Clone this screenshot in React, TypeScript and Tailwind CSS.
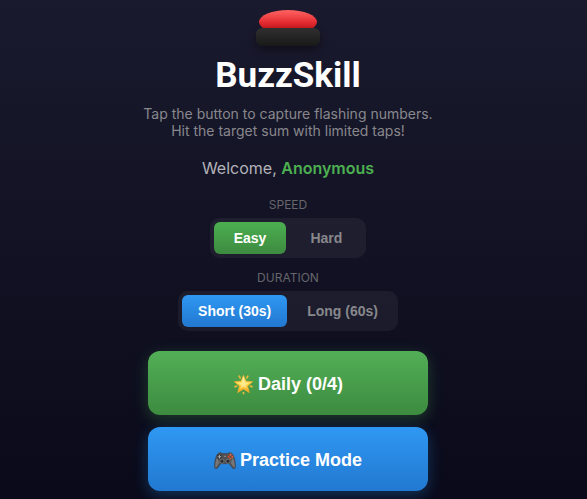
import { useState, type ReactNode } from "react";
import clsx from "clsx";

type OptionGroupProps = {
  id: string;
  label: string;
  options: string[];
  buttonClass: string;
  activeClass: string;
};

function OptionGroup({ id, label, options, buttonClass, activeClass }: OptionGroupProps) {
  const [selected, setSelected] = useState(options[0]);

  return (
    <section className="flex flex-col items-center gap-[5px]">
      <h2 id={id} className="text-[12px] leading-[17px] text-[#66666b] uppercase">
        {label}
      </h2>
      <div
        role="group"
        aria-labelledby={id}
        className="flex gap-1 rounded-[10px] bg-white/5 p-1"
      >
        {options.map((option) => (
          <button
            key={option}
            type="button"
            aria-pressed={selected === option}
            onClick={() => setSelected(option)}
            className={clsx(
              "h-8 rounded-md font-['Liberation_Sans',Arial,sans-serif] text-[14px] font-bold",
              buttonClass,
              selected === option ? activeClass : "text-[#88888c]",
            )}
          >
            {option}
          </button>
        ))}
      </div>
    </section>
  );
}

function MenuButton({ className, children }: { className: string; children: ReactNode }) {
  return (
    <button
      type="button"
      className={clsx(
        "flex h-16 w-full items-center justify-center gap-1 rounded-xl pt-0.5 font-['Liberation_Sans',Arial,sans-serif] text-[18px] font-bold text-white",
        className,
      )}
    >
      {children}
    </button>
  );
}

function Buzzer() {
  return (
    <div className="flex flex-col items-center" aria-hidden="true">
      <div className="-mb-1.5 h-6 w-[58px] rounded-[50%] bg-linear-to-b from-[#ff6262] via-[#e52d33] to-[#b8000a]" />
      <div className="z-10 h-[18px] w-16 rounded-md bg-linear-to-b from-[#303030] to-[#191919] shadow-[0_4px_8px_rgba(0,0,0,0.4)]" />
    </div>
  );
}

function StarIcon() {
  return (
    <svg className="size-[21px]" viewBox="0 0 21 21" aria-hidden="true">
      <defs>
        <linearGradient id="star" x1="0" y1="0" x2="0" y2="1">
          <stop offset="0" stopColor="#fff3a3" />
          <stop offset="0.5" stopColor="#ffd94a" />
          <stop offset="1" stopColor="#f5a51d" />
        </linearGradient>
      </defs>
      <g stroke="#e5b93c" strokeWidth="1.8" strokeLinecap="round">
        <path d="M6.2 2.2l.9 1.7M14.8 2.2l-.9 1.7M2 12.7l1.6-.5M19 12.7l-1.6-.5M10.5 18.6v.8" />
      </g>
      <path
        d="M10.5 1.2l2.5 6 6.7.5-5.1 4.3 1.7 6.6-5.8-3.5-5.8 3.5L6.4 12 1.3 7.7 8 7.2z"
        fill="url(#star)"
        stroke="#f2ac2b"
        strokeWidth="0.7"
        strokeLinejoin="round"
      />
      <path
        d="M10.5 4.4l1.4 4.1 3.7.4-3 2.3.8 3.3-2.9-1.9-2.9 1.9.8-3.3-3-2.3 3.7-.4z"
        fill="#fff6ba"
        opacity="0.6"
      />
    </svg>
  );
}

function GamepadIcon() {
  return (
    <svg className="h-[21px] w-[22px]" viewBox="0 0 22 21" aria-hidden="true">
      <path
        d="M4.4 3.2c1.4-.9 3.3-.7 4.2.3h4.8c.9-1 2.8-1.2 4.2-.3 2.3 1.5 4 8.2 3.9 13.3 0 1.6-.9 2.5-2 2.2-1.8-.4-2.7-3.6-4.2-5H6.7c-1.5 1.4-2.4 4.6-4.2 5-1.1.3-2-.6-2-2.2C.4 11.4 2.1 4.7 4.4 3.2z"
        fill="#505053"
        stroke="#38383a"
        strokeWidth="0.5"
      />
      <path
        d="M1.3 17c-.2-3 .5-6.8 1.9-9.7l2 5.7c-1.3 1.3-2 4-3.2 4.6-.4.1-.7-.2-.7-.6zM20.700 17c.2-3-.5-6.8-1.9-9.7l-2 5.7c1.3 1.3 2 4 3.2 4.6.4.1.7-.2.7-.6z"
        fill="#77777a"
      />
      <circle cx="5.5" cy="6.7" r="2.5" fill="#343437" />
      <path d="M5.5 4.9v3.6M3.7 6.700h3.6" stroke="#a9a9ab" strokeWidth="1.1" />
      <circle cx="8" cy="11.2" r="2.1" fill="#2c2c2f" stroke="#8a8a8d" strokeWidth="0.7" />
      <circle cx="14" cy="11.2" r="2.1" fill="#2c2c2f" stroke="#8a8a8d" strokeWidth="0.7" />
      <circle cx="16.5" cy="4.7" r="1.1" fill="#f0603c" />
      <circle cx="18.4" cy="6.7" r="1.1" fill="#e8552f" />
      <circle cx="14.6" cy="6.7" r="1.1" fill="#d9482b" />
      <circle cx="16.5" cy="8.5" r="1.1" fill="#c9622f" />
      <path d="M10 6.3h2" stroke="#98989b" strokeWidth="0.9" />
    </svg>
  );
}

export default function App() {
  return (
    <main className="flex min-h-screen flex-col items-center bg-linear-to-b from-[#1a1a2e] to-[#0a0a1a] pt-2.5 pr-[11px] pb-2 font-['Inter',sans-serif]">
      <Buzzer />
      <h1 className="mt-2.5 font-['Roboto',sans-serif] text-[35px] leading-10 font-bold text-white">
        BuzzSkill
      </h1>
      <p className="mt-[9px] text-center text-[14px] leading-[17px] text-[#88888c]">
        Tap the button to capture flashing numbers.
        <br />
        Hit the target sum with limited taps!
      </p>
      <p className="mt-[17px] text-[16px] leading-6 text-[#b3b3b8]">
        Welcome, <strong className="font-semibold text-[#4caf50]">Anonymous</strong>
      </p>

      <div className="mt-4 flex flex-col gap-[11px]">
        <OptionGroup
          id="speed"
          label="Speed"
          options={["Easy", "Hard"]}
          buttonClass="px-5"
          activeClass="bg-linear-to-b from-[#4caf50] to-[#3d8b40] text-white"
        />
        <OptionGroup
          id="duration"
          label="Duration"
          options={["Short (30s)", "Long (60s)"]}
          buttonClass="px-4"
          activeClass="bg-linear-to-b from-[#2f98f3] to-[#2278d0] text-white"
        />
      </div>

      <div className="mt-5 flex w-full max-w-[280px] flex-col gap-3">
        <MenuButton className="bg-linear-to-b from-[#52af56] to-[#3d8b40] shadow-[0_4px_15px_rgba(76,175,80,0.3)]">
          <StarIcon />
          Daily (0/4)
        </MenuButton>
        <MenuButton className="bg-linear-to-b from-[#2f98f3] to-[#2278d0] shadow-[0_4px_15px_rgba(33,150,243,0.3)]">
          <GamepadIcon />
          Practice Mode
        </MenuButton>
      </div>
    </main>
  );
}
